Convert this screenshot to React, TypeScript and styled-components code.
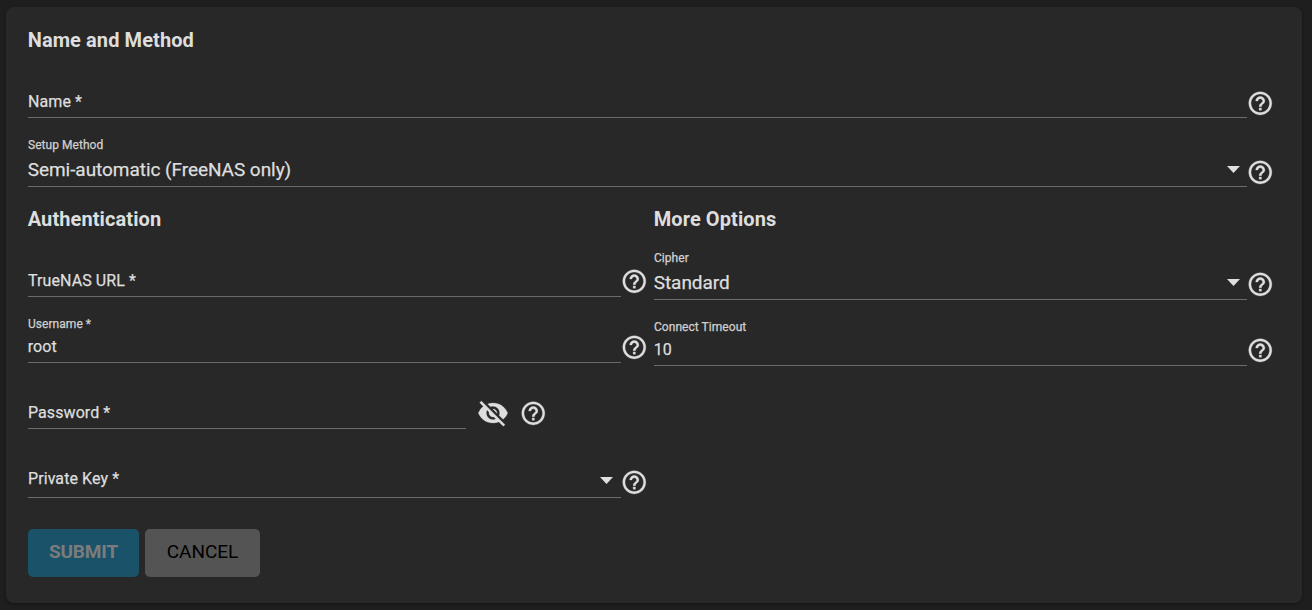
import React from "react";
import styled, { createGlobalStyle } from "styled-components";
import { MdHelpOutline, MdVisibilityOff } from "react-icons/md";

const GlobalStyle = createGlobalStyle`
  * { box-sizing: border-box; }
  body {
    margin: 0;
    background: #1e1e1e;
    color: #dedede;
    font-family: Roboto, "Liberation Sans", sans-serif;
  }
`;

const Page = styled.main`
  height: 610px;
  padding: 7px 10px 7px 6px;
  overflow: hidden;
`;

const Card = styled.form`
  height: 596px;
  padding: 20px 30px 0 22px;
  border-radius: 8px;
  background: #282828;
  box-shadow: 0 1px 3px rgba(0, 0, 0, 0.3);
`;

const Columns = styled.div`
  display: grid;
  grid-template-columns: 618px 618px;
  column-gap: 8px;
  padding-top: 19px;
`;

const Column = styled.section``;

const Heading = styled.h2`
  margin: 0;
  height: 26px;
  font-size: 20px;
  font-weight: 700;
  line-height: 26px;
  letter-spacing: 0.09px;
  text-indent: -0.3px;
`;

const FieldRow = styled.div<{ $height: number }>`
  display: flex;
  height: ${(p) => p.$height}px;
  align-items: flex-end;
`;

const FieldBox = styled.div<{ $width?: number; $pad: number }>`
  display: flex;
  flex: ${(p) => (p.$width ? `0 0 ${p.$width}px` : "1 1 0")};
  align-items: flex-end;
  justify-content: space-between;
  padding-bottom: ${(p) => p.$pad}px;
  border-bottom: 1px solid #6b6b6b;
`;

const Texts = styled.div`
  display: flex;
  flex-direction: column;
  -webkit-text-stroke: 0.25px currentColor;
`;

const SmallLabel = styled.label<{ $gap: number }>`
  margin-bottom: ${(p) => p.$gap}px;
  font-size: 12px;
  line-height: 14px;
  letter-spacing: 0.05px;
  color: #d0d0d0;
`;

const Value = styled.span<{ $size: number; $filled: boolean }>`
  font-size: ${(p) => p.$size}px;
  line-height: 20px;
  letter-spacing: ${(p) => (p.$size > 16 ? -0.05 : 0.08)}px;
  text-indent: ${(p) => (p.$filled ? -0.3 : 0)}px;
  white-space: pre;
`;

const Arrow = styled.span<{ $filled: boolean }>`
  width: 13px;
  height: 7px;
  margin: ${(p) => (p.$filled ? "0 7px 7px 0" : "0 8px 5px 0")};
  background: #e0e0e0;
  clip-path: polygon(0 0, 100% 0, 50% 100%);
`;

const HelpIcon = styled(MdHelpOutline).attrs({ viewBox: "1.35 1.3 20.8 20.8" })<{ $bottom: number; $left: number }>`
  flex: none;
  width: 24px;
  height: 24px;
  margin: 0 0 ${(p) => p.$bottom}px ${(p) => p.$left}px;
  overflow: visible;
  stroke: currentColor;
  stroke-width: 0.25px;

  path[fill="none"] {
    stroke: none;
  }
`;

const EyeIcon = styled(MdVisibilityOff)`
  flex: none;
  width: 32px;
  height: 32px;
  margin: 0 0 0 11px;
  stroke: currentColor;
  stroke-width: 0.2px;

  path[fill="none"] {
    stroke: none;
  }
`;

const Actions = styled.div`
  display: flex;
  gap: 6px;
  margin-top: 31px;
`;

const Button = styled.button<{ $primary?: boolean }>`
  width: ${(p) => (p.$primary ? 111 : 115)}px;
  height: 48px;
  padding: 0 0 3px;
  border: 0;
  border-radius: 5px;
  background: ${(p) => (p.$primary ? "#1a5269" : "#545454")};
  color: ${(p) => (p.$primary ? "#7c7c7c" : "#000")};
  font-family: inherit;
  font-size: 19px;
  font-weight: ${(p) => (p.$primary ? 700 : 400)};
  letter-spacing: ${(p) => (p.$primary ? -0.15 : 0)}px;
`;

type FieldProps = {
  label: string;
  value?: string;
  select?: boolean;
  height: number;
  width?: number;
  helpBottom?: number;
  helpLeft?: number;
  password?: boolean;
};

function Field({ label, value, select, height, width, helpBottom = 4, helpLeft = 1, password }: FieldProps) {
  return (
    <FieldRow $height={height}>
      <FieldBox $width={width} $pad={select ? (value ? 6 : 8) : 5}>
        <Texts>
          {value && <SmallLabel $gap={select ? 8 : 6}>{label}</SmallLabel>}
          <Value $size={value && select ? 19 : 16} $filled={!!value}>{value ?? label}</Value>
        </Texts>
        {select && <Arrow $filled={!!value} />}
      </FieldBox>
      {password && <EyeIcon />}
      <HelpIcon $bottom={helpBottom} $left={helpLeft} />
    </FieldRow>
  );
}

export default function App() {
  return (
    <>
      <GlobalStyle />
      <Page>
        <Card>
          <Heading>Name and Method</Heading>
          <Field label="Name *" height={65} helpBottom={3} />
          <Field label="Setup Method" value="Semi-automatic (FreeNAS only)" select height={69} helpBottom={3} />
          <Columns>
            <Column>
              <Heading>Authentication</Heading>
              <Field label="TrueNAS URL *" height={65} />
              <Field label="Username *" value="root" height={66} />
              <Field label="Password *" height={66} width={438} password helpLeft={12} />
              <Field label="Private Key *" select height={69} />
            </Column>
            <Column>
              <Heading>More Options</Heading>
              <Field label="Cipher" value="Standard" select height={68} />
              <Field label="Connect Timeout" value="10" height={66} />
            </Column>
          </Columns>
          <Actions>
            <Button type="button" $primary disabled>SUBMIT</Button>
            <Button type="button">CANCEL</Button>
          </Actions>
        </Card>
      </Page>
    </>
  );
}
